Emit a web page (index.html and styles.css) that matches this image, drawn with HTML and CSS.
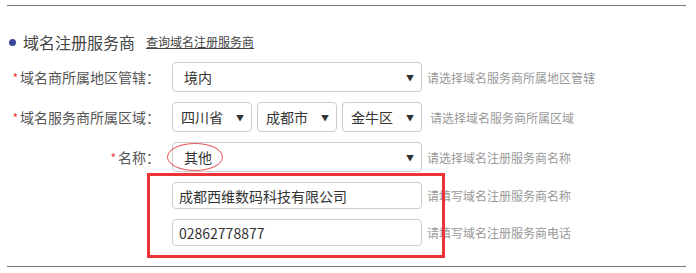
FILE: index.html
```html
<!DOCTYPE html>
<html lang="zh-CN">
<head>
  <meta charset="UTF-8" />
  <title>域名注册服务商</title>
  <link rel="stylesheet" href="styles.css">
</head>
<body>
  <div class="page">
    <div class="section-title">
      <span class="dot"></span>
      <h2>域名注册服务商</h2>
      <a href="#" class="query-link">查询域名注册服务商</a>
    </div>

    <div class="form-row">
      <label class="label"><span class="req">*</span>域名商所属地区管辖：</label>
      <div class="select wide"><span>境内</span><span class="arrow">▼</span></div>
      <span class="help">请选择域名服务商所属地区管辖</span>
    </div>

    <div class="form-row">
      <label class="label"><span class="req">*</span>域名服务商所属区域：</label>
      <div class="select-group">
        <div class="select small"><span>四川省</span><span class="arrow">▼</span></div>
        <div class="select small"><span>成都市</span><span class="arrow">▼</span></div>
        <div class="select small"><span>金牛区</span><span class="arrow">▼</span></div>
      </div>
      <span class="help help-area">请选择域名服务商所属区域</span>
    </div>

    <div class="form-row">
      <label class="label"><span class="req">*</span>名称：</label>
      <div class="select wide"><span>其他</span><span class="arrow">▼</span></div>
      <span class="help">请选择域名注册服务商名称</span>
    </div>

    <div class="form-row">
      <label class="label"></label>
      <input type="text" class="text-input" value="成都西维数码科技有限公司" />
      <span class="help">请填写域名注册服务商名称</span>
    </div>

    <div class="form-row last">
      <label class="label"></label>
      <input type="text" class="text-input" value="02862778877" />
      <span class="help">请填写域名注册服务商电话</span>
    </div>

    <!-- annotation marks -->
    <div class="mark-ellipse"></div>
    <div class="mark-box"></div>
  </div>
</body>
</html>
```

FILE: styles.css
```css
body {
  margin: 0;
  font-family: "Noto Sans CJK SC", "Liberation Sans", sans-serif;
  background: #fff;
  color: #333;
}
.page {
  position: relative;
  margin: 5px 10px 0 7px;
  padding-bottom: 20px;
  border-top: 1px solid #6e7a87;
  border-bottom: 1px solid #6e7a87;
}
.section-title {
  display: flex;
  align-items: center;
  height: 24px;
  margin-top: 24px;
  margin-bottom: 8px;
}
.dot {
  width: 7px;
  height: 7px;
  border-radius: 50%;
  background: #3a4799;
  margin-left: 2px;
  margin-right: 7px;
}
.section-title h2 {
  margin: 0;
  font-size: 16px;
  font-weight: normal;
  color: #444;
  line-height: 24px;
}
.query-link {
  margin-left: 11px;
  font-size: 12px;
  color: #444;
  text-decoration: underline;
  line-height: 24px;
}
.form-row {
  display: flex;
  align-items: center;
  margin-bottom: 10px;
}
.form-row.last {
  margin-bottom: 0;
}
.label {
  width: 153px;
  margin-right: 12px;
  text-align: right;
  font-size: 14px;
  color: #555;
  white-space: nowrap;
}
.req {
  color: #e4393c;
  font-size: 12px;
  margin-right: 2px;
}
.select {
  box-sizing: border-box;
  height: 30px;
  display: flex;
  align-items: center;
  justify-content: space-between;
  padding: 0 7px 0 11px;
  border: 1px solid #ccc;
  border-radius: 4px;
  font-size: 14px;
  color: #333;
  background: #fff;
}
.select.wide {
  width: 250px;
}
.select-group {
  display: flex;
  gap: 5px;
}
.select.small {
  width: 80px;
  padding-left: 8px;
}
.arrow {
  font-size: 8px;
  color: #333;
}
.text-input {
  box-sizing: border-box;
  width: 250px;
  height: 27px;
  padding: 0 6px;
  border: 1px solid #ccc;
  border-radius: 4px;
  font-family: inherit;
  font-size: 14px;
  color: #333;
  outline: none;
}
.help {
  margin-left: 5px;
  font-size: 12px;
  color: #999;
  white-space: nowrap;
}
.help-area {
  margin-left: 8px;
}
.mark-box {
  position: absolute;
  left: 140px;
  top: 167px;
  width: 292px;
  height: 79px;
  border: 3px solid #ee3338;
}
.mark-ellipse {
  position: absolute;
  left: 160px;
  top: 137px;
  width: 54px;
  height: 26px;
  border: 1px solid #e8595c;
  border-radius: 50%;
}
```
